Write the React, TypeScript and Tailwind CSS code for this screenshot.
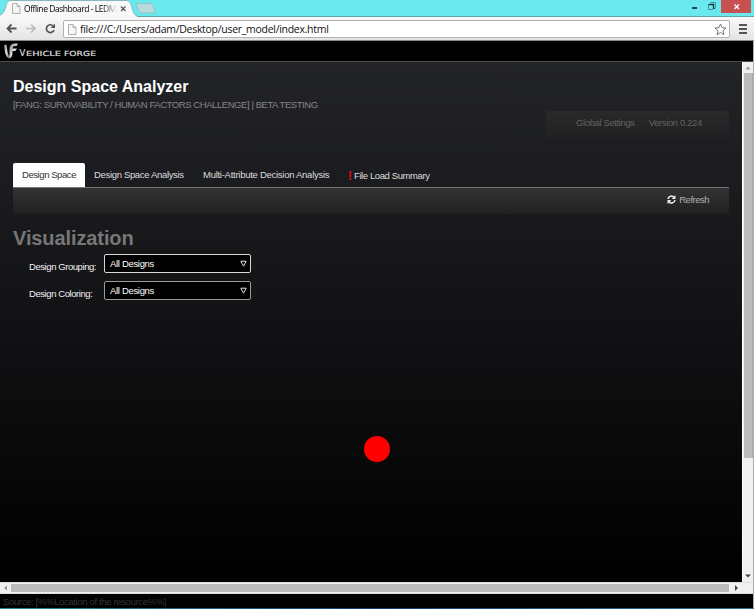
import React from "react";

function PageIcon() {
  return (
    <svg width="9" height="11" viewBox="0 0 9 11" className="shrink-0">
      <path d="M.5.5h4.500l3 3v7h-7.500z" fill="#f6f6f6" stroke="#b0b0b0" />
      <path d="M5 .5v3h3" fill="none" stroke="#b0b0b0" />
    </svg>
  );
}

function TitleBar() {
  return (
    <div className="relative h-[17px] w-full shrink-0 bg-[#69e8ee]">
      <svg width="754" height="17" className="absolute left-0 top-0">
        <path d="M0 16.5H754" stroke="#5ba5ab" />
        <path d="M0 17V15C3 14.500 4 12 6 6C7 2 8 .5 11 .5H126C129 .5 130 2 131.500 6C133 11 134 15.500 138 16.500V17Z" fill="#f8f8f8" />
        <path d="M0 15C3 14.500 4 12 6 6C7 2 8 .5 11 .5H126C129 .5 130 2 131.500 6C133 11 134 15.500 138 16.500" fill="none" stroke="#86b8bb" />
        <path d="M137 3.500H150C152 3.500 153 5 153.500 7L155.500 13H142C140 13 139 12 138.500 10L136 5Q135.500 3.500 137 3.500Z" fill="#b8dadc" stroke="#83bfc3" strokeWidth=".8" />
        <path d="M121 6.500L125.500 11M125.500 6.500L121 11" stroke="#555" strokeWidth="1.200" />
        <path d="M692 8H697" stroke="#20494b" strokeWidth="2" />
        <path d="M710.500 2.500H715.500V8.500H714" fill="none" stroke="#3d999e" />
        <path d="M708.500 4V9.500H713" fill="none" stroke="#3d8f93" />
        <path d="M709 4.500H713.500V9" fill="none" stroke="#173537" strokeWidth="1.400" />
        <path d="M721 0H751V13H721Z" fill="#c75050" />
        <path d="M734.500 4.500L739 9M739 4.500L734.500 9" stroke="#fff" strokeWidth="1.300" />
      </svg>
      <div className="relative flex h-[17px] items-center pl-3">
        <PageIcon />
        <span className="ml-[3px] whitespace-nowrap bg-gradient-to-r from-black from-82% to-[#e8e8e8] bg-clip-text font-['Open_Sans',sans-serif] text-[8.5px] leading-[17px] tracking-[-0.45px] text-transparent">Offline Dashboard - LEDM</span>
      </div>
    </div>
  );
}

function Toolbar() {
  return (
    <div className="flex h-6 w-full shrink-0 items-center border-b border-[#888] bg-linear-to-b/srgb from-[#f8f8f8] to-[#e4e4e4]">
      <svg width="63" height="23" viewBox="0 17 63 23" className="shrink-0">
        <path d="M16.500 28.500H8M11.500 24.500L7.500 28.500L11.500 32.500" fill="none" stroke="#555" strokeWidth="1.800" />
        <path d="M26 28.500H35M31 24.500L35 28.500L31 32.500" fill="none" stroke="#bbb" strokeWidth="1.600" />
        <path d="M53.200 26A3.900 3.900 0 1 0 54 30" fill="none" stroke="#555" strokeWidth="1.700" />
        <path d="M55 23.500V28H50.500Z" fill="#555" />
      </svg>
      <div className="mt-px flex h-[18px] w-[667px] shrink-0 items-center rounded-[2px] border border-[#b2b2b2] bg-white pl-1">
        <PageIcon />
        <span className="ml-[3px] whitespace-nowrap font-['Open_Sans',sans-serif] text-[10.5px] leading-4 tracking-[-0.29px] text-[#111]">file:///C:/Users/adam/Desktop/user_model/index.html</span>
        <svg width="13" height="13" viewBox="0 0 13 13" className="ml-auto mr-[2px]">
          <path d="M6.500 1L8.100 4.700L12.100 5L9.100 7.600L10 11.600L6.500 9.500L3 11.600L3.900 7.600L.9 5L4.900 4.700Z" fill="#fff" stroke="#777" />
        </svg>
      </div>
      <div className="ml-[9px] flex w-2 shrink-0 flex-col gap-[2px]">
        <div className="h-[2px] bg-[#555]" />
        <div className="h-[2px] bg-[#555]" />
        <div className="h-[2px] bg-[#555]" />
      </div>
    </div>
  );
}

function Brand() {
  return (
    <div className="h-5 shrink-0 bg-black">
      <svg width="110" height="20" viewBox="0 41 110 20">
        <defs>
          <linearGradient id="metal" x1="0" x2="1" y1="0" y2="1">
            <stop offset="0" stopColor="#777" />
            <stop offset=".5" stopColor="#e0e0e0" />
            <stop offset="1" stopColor="#666" />
          </linearGradient>
        </defs>
        <path d="M4 45L6.500 44.500L7.500 52Q8 55 9.500 56V58.500Q6 57.500 5 52Z" fill="url(#metal)" />
        <path d="M9.500 58.500V49Q9.500 44 14 43.500H18L16.500 46H14.500Q12.500 46 12.500 48.500H17L15.500 51H12.500V54Q12 57.500 9.500 58.500Z" fill="url(#metal)" />
        <g fill="#ddd" stroke="#ddd" strokeWidth=".2" fontFamily="DejaVu Sans, sans-serif">
          <text fontSize="8.500" x="19.500" y="55.500">V</text>
          <text fontSize="7" x="26" y="55.500" textLength="35" lengthAdjust="spacingAndGlyphs">EHICLE</text>
          <text fontSize="7" x="64" y="55.500" textLength="32" lengthAdjust="spacingAndGlyphs">FORGE</text>
        </g>
      </svg>
    </div>
  );
}

function Field({ label, border }: { label: string; border: string }) {
  return (
    <div className="flex h-[27px] items-start">
      <span className="mt-[7px] w-[75px] text-[9.5px] leading-3 tracking-[-0.43px] text-[#f0f0f0]">{label}</span>
      <div className={`flex h-[19px] w-[147px] items-center rounded-[2px] border bg-black pl-[5px] pr-[3px] ${border}`}>
        <span className="text-[9.5px] leading-3 tracking-[-0.32px] text-white">All Designs</span>
        <svg width="7" height="7" viewBox="0 0 7 7" className="ml-auto">
          <path d="M.8 1.200H6.200L3.500 6.200Z" fill="none" stroke="#ddd" />
        </svg>
      </div>
    </div>
  );
}

function Content() {
  return (
    <main className="flex h-[520px] w-[742px] flex-col overflow-hidden bg-linear-to-b/srgb from-[#232428] to-black px-[13px]">
      <h1 className="mt-[15px] h-5 shrink-0 text-[16px] font-bold leading-5 text-white">Design Space Analyzer</h1>
      <div className="mt-[2px] h-3 shrink-0 text-[9.5px] leading-3 tracking-[-0.43px] text-[#858585]">[FANG: SURVIVABILITY / HUMAN FACTORS CHALLENGE] | BETA TESTING</div>
      <div className="ml-auto flex h-[27px] w-[183px] shrink-0 gap-[14px] rounded-[2px] bg-linear-to-b/srgb from-[#29292a] to-[#202122] pl-[30px] pt-[6px] text-[9.5px] leading-3 tracking-[-0.38px] text-[#626262]">
        <span>Global Settings</span><span>Version 0.224</span>
      </div>
      <nav className="mt-[25px] flex h-6 shrink-0 text-[9.5px] leading-6 tracking-[-0.33px] text-[#ddd]">
        <span className="w-[72px] rounded-t-[2px] bg-white pl-[9px] tracking-[-0.43px] text-[#333]">Design Space</span>
        <span className="ml-[9px] w-[109px]">Design Space Analysis</span>
        <span className="w-[145px] tracking-[-0.27px]">Multi-Attribute Decision Analysis</span>
        <span className="flex pt-px tracking-[-0.4px]"><span className="w-[6px] text-[12px] font-bold text-[#e00c14]">!</span>File Load Summary</span>
      </nav>
      <div className="flex h-[27px] w-[716px] shrink-0 items-center justify-end rounded-b-[2px] border-t border-[#777] bg-linear-to-b/srgb from-[#333] to-[#202020] pb-[2px] pr-5">
        <svg width="9" height="9" viewBox="0 0 9 9" className="mr-[3px] mt-[-2px]">
          <path d="M1 4A3.400 3.400 0 0 1 7 2.300M8 5A3.400 3.400 0 0 1 2 6.700" fill="none" stroke="#eee" strokeWidth="1.500" />
          <path d="M8.500 0V4H4.700ZM.5 9V5H4.300Z" fill="#eee" />
        </svg>
        <span className="text-[9.5px] leading-3 tracking-[-0.5px] text-[#b0b0b0]">Refresh</span>
      </div>
      <h2 className="mt-[11px] h-[26px] shrink-0 text-[20px] font-bold leading-[26px] tracking-[-0.1px] text-[#777]">Visualization</h2>
      <div className="ml-4 mt-[3px] shrink-0">
        <Field label="Design Grouping:" border="border-[#d8d8d8]" />
        <Field label="Design Coloring:" border="border-[#999]" />
      </div>
      <div className="ml-[351px] mt-[128px] size-[26px] shrink-0 rounded-full bg-[#f00]" />
    </main>
  );
}

export default function App() {
  return (
    <div className="flex h-[609px] w-[754px] flex-col overflow-hidden bg-black font-['Liberation_Sans',Arial,sans-serif]">
      <TitleBar />
      <Toolbar />
      <div className="flex h-[567px] shrink-0 border-r border-[#b0b09a]">
        <div className="flex w-full flex-col">
          <Brand />
          <div className="flex h-[521px] shrink-0 border-t border-[#4b4b4b]">
            <Content />
            <div className="flex w-[11px] flex-col items-center border-l border-white bg-[#f0f0f0]">
              <svg width="10" height="11" className="shrink-0"><path d="M2.500 7.500L5 4.500L7.500 7.500Z" fill="#999" /></svg>
              <div className="h-[385px] w-[9px] shrink-0 border-r border-[#aaa] bg-[#bcbcbc]" />
              <svg width="10" height="11" className="mt-auto"><path d="M2 3.500H8L5 6.500Z" fill="#444" /></svg>
            </div>
          </div>
          <div className="flex h-3 shrink-0 items-center border-b border-t border-[#dedede] bg-[#f0f0f0]">
            <svg width="11" height="10"><path d="M7 2.500V7.500L4 5Z" fill="#999" /></svg>
            <div className="h-2 w-[718px] bg-[#bcbcbc]" />
            <svg width="13" height="10"><path d="M6 2V8L9 5Z" fill="#444" /></svg>
          </div>
          <div className="h-[14px] pl-[3px] text-[9.5px] leading-[16px] tracking-[-0.35px] text-[#343434]">Source: [%%Location of the resource%%]</div>
        </div>
      </div>
      <div className="h-px bg-gradient-to-r from-[#248a8d] via-[#183c72] to-[#306f8c]" />
    </div>
  );
}
